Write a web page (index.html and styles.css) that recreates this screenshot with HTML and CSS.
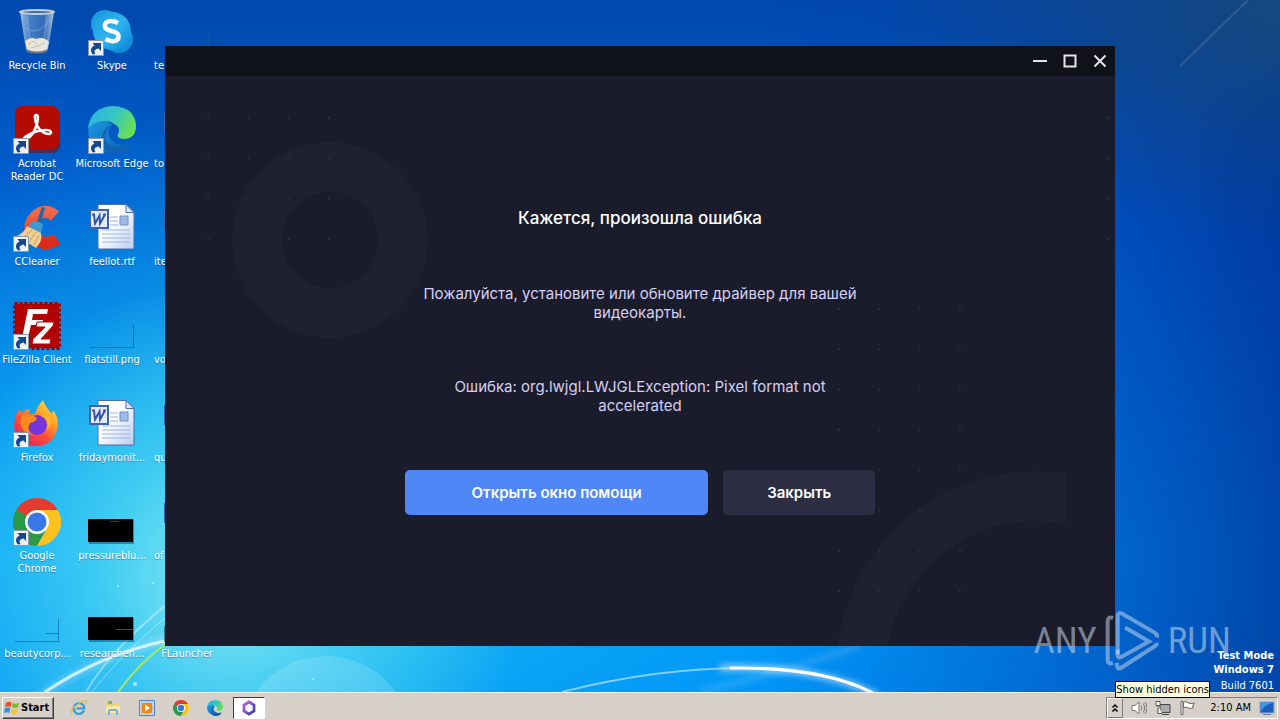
FILE: index.html
```html
<!DOCTYPE html>
<html lang="ru">
<head>
    <meta charset="UTF-8">
    <meta name="viewport" content="width=device-width, initial-scale=1.0">
    <title>FLauncher</title>
    <link rel="stylesheet" href="styles.css">
</head>
<body>

    <!-- Shared icons -->
    <svg class="sprite" aria-hidden="true">
        <defs>
            <linearGradient id="gBin" x1="0" x2="1"><stop offset="0" stop-color="#b9cfe6"/><stop offset=".3" stop-color="#4f86c8"/><stop offset=".7" stop-color="#3a70b8"/><stop offset="1" stop-color="#c5d8ea"/></linearGradient>
            <linearGradient id="gSkype" x1="0" y1="0" x2="1" y2="1"><stop offset="0" stop-color="#1a9bdc"/><stop offset=".5" stop-color="#2cb4ee"/><stop offset="1" stop-color="#0d86d8"/></linearGradient>
            <linearGradient id="gEdgeTop" x1="0" x2="1" y1=".2" y2=".6"><stop offset="0" stop-color="#2fb2e4"/><stop offset=".5" stop-color="#35c6c4"/><stop offset="1" stop-color="#6fe04a"/></linearGradient>
            <linearGradient id="gEdgeLow" x1="0" x2="1" y2="1"><stop offset="0" stop-color="#1a9be0"/><stop offset="1" stop-color="#0f5cae"/></linearGradient>
            <linearGradient id="gCc" x2="0" y2="1"><stop offset="0" stop-color="#f0694a"/><stop offset="1" stop-color="#d92a1c"/></linearGradient>
            <linearGradient id="gDoc" x2="1" y2="1"><stop offset=".4" stop-color="#fff"/><stop offset="1" stop-color="#b9cdf0"/></linearGradient>
            <linearGradient id="gFox" x1="1" x2=".3" y2="1"><stop offset="0" stop-color="#fff44f"/><stop offset=".35" stop-color="#ffa726"/><stop offset=".7" stop-color="#ff4a3a"/><stop offset="1" stop-color="#e0245e"/></linearGradient>
            <linearGradient id="gHex" x2="1" y2="1"><stop offset="0" stop-color="#b264d8"/><stop offset="1" stop-color="#3f3ea8"/></linearGradient>
        </defs>

        <symbol id="arrow" viewBox="0 0 16 16">
            <path d="M.5.5h15v15H.5z" fill="#eef1f5" stroke="#8b98a8"/>
            <path d="M5 14.500C1.500 11 3 7 6.500 5.500L4.500 3H13v8L10.500 8.500C7 9 5.500 11 7.500 14z" fill="#17468c"/>
        </symbol>

        <symbol id="bin" viewBox="0 0 48 48">
            <path d="M7 4h34l-6 38q-11 5-22 0z" fill="url(#gBin)" opacity=".85"/>
            <path d="M14 9l4 28M34 9l-4 27M12 20q14 9 24-8" fill="none" stroke="#9cc0e6" stroke-opacity=".5"/>
            <path d="M12 33q6-5 11-2 8-3 13 3l-2 8q-10 5-20 0z" fill="#e9e4dc"/>
            <path d="M15 36l6-3 5 5 6-4M18 40l7-2" fill="none" stroke="#cdbfa8"/>
            <path d="M13 41q11 5 22 0l-1 3q-10 3-20 0z" fill="#6d7884"/>
            <ellipse cx="24" cy="4" rx="17" ry="2" fill="#3d6fa8" stroke="#c4cbd2" stroke-width="2"/>
        </symbol>

        <symbol id="skype" viewBox="0 0 48 48">
            <circle cx="17" cy="16" r="14" fill="#1b9fe2"/>
            <circle cx="31" cy="31" r="14" fill="#0e90dc"/>
            <circle cx="24" cy="23" r="19" fill="url(#gSkype)"/>
            <path d="M30 15q-6-3-10-1.500c-5 2-4 7.500 2 9s9 3 8.500 7-7 5-13 1.500" fill="none" stroke="#fff" stroke-width="4.500"/>
        </symbol>

        <symbol id="acrobat" viewBox="0 0 48 48">
            <rect x="2" y="1" width="44" height="44" rx="7" fill="#7a0700" opacity=".5" transform="translate(1 2)"/>
            <rect x="2" y="0" width="44" height="43" rx="7" fill="#b30b00"/>
            <path d="M12 34c8-4 12-13 13-22 0-4-4-4-3 0 1 9 7 16 14 16 4-1 2-4-3-4-8 0-15 3-21 7-3 3-2 5 0 3z" fill="none" stroke="#fff" stroke-width="2.500"/>
        </symbol>

        <symbol id="edge" viewBox="0 0 48 48">
            <path d="M1 18Q-3 36 15 45q18 7 28-8-12 5-20-3-6-8 1-15Q14 8 1 18z" fill="url(#gEdgeLow)"/>
            <path d="M24 19q-9 7-6 16 6 10 26 3-8 13-23 9Q12 40 15 27q3-7 9-8z" fill="#1262b4"/>
            <path d="M0 22Q3 1 25 0q22 1 23 20 0 13-13 13-7-1-5-5 3-5-2-9Q15 9 0 22z" fill="url(#gEdgeTop)"/>
        </symbol>

        <symbol id="ccleaner" viewBox="0 0 48 48">
            <path d="M42 12Q32 3 22 13q-10 12 1 22 10 8 21 0" fill="none" stroke="url(#gCc)" stroke-width="12"/>
            <path d="M29 3l3 1-5 18-4-2z" fill="#2268a8"/>
            <path d="M18 18q6-3 12 3l-2 8-12-6z" fill="#3f9ad4"/>
            <path d="M14 22l14 7q2 8-5 15L4 32q7-3 10-10z" fill="#f1cf93"/>
            <path d="M9 35l10-9M15 39l8-11M21 41l5-10" stroke="#c99c55"/>
        </symbol>

        <symbol id="word" viewBox="0 0 48 48">
            <path d="M10 .5h28l8 8V45H10z" fill="url(#gDoc)" stroke="#4a6cae"/>
            <path d="M38 .5l8 8h-8z" fill="#dfe9fa" stroke="#4a6cae"/>
            <path d="M22 13h8M22 17h8M22 21h8M14 26h28M14 30h28M14 34h28M14 38h28" stroke="#9db3de"/>
            <path d="M32 12h8v9h-8z" fill="#9db9e4" stroke="#6f90cc"/>
            <path d="M2 6h18v18H2z" fill="#e2ebfb" stroke="#3f62b0" stroke-width="2"/>
            <path d="M4 10.500h3M6 10.500l1 9 4.500-8 .5 8 5-9M15 10.500h3" fill="none" stroke="#3454a8" stroke-width="2"/>
        </symbol>

        <symbol id="filezilla" viewBox="0 0 48 48">
            <rect x="2" y="2" width="44" height="44" fill="#b30000"/>
            <rect x="1.500" y="1.500" width="45" height="45" fill="none" stroke="#a00000" stroke-width="3" stroke-dasharray="3 2"/>
            <path d="M15 7h20l-1 5H20l-1 6h11l-1 5H18l-3 13H9z" fill="#fff"/>
            <path d="M24 20h17l-1 4-12 13h10l-1 5H19l1-5 12-12h-9z" fill="#fff" stroke="#b30000" stroke-width="1"/>
        </symbol>

        <symbol id="firefox" viewBox="0 0 48 48">
            <path d="M3 17q0-5 4-8 0 3 2 4 3-4 8-4l-2 5h7q3-9 8-14 3 8 9 14l1-4q7 9 4 20-5 16-21 16Q3 46 1 26q0-5 2-9z" fill="url(#gFox)"/>
            <circle cx="24" cy="25" r="10" fill="#7436d8"/>
            <path d="M9 15q10-1 15 3-1 4-7 5-4 8 3 12Q8 33 7 21z" fill="#ff8a1e"/>
            <path d="M28 16q10 4 5 14 6-3 5-12-5-5-10-2z" fill="#ffb52e"/>
        </symbol>

        <symbol id="chrome" viewBox="0 0 48 48">
            <path d="M24 24L3.200 12A24 24 0 0 1 44.800 12z" fill="#e33b2e"/>
            <path d="M24 24L3.200 12A24 24 0 0 0 24 48l10-18z" fill="#2a9a47"/>
            <path d="M24 12h20.800A24 24 0 0 1 24 48l10.400-18z" fill="#fcc31e"/>
            <circle cx="24" cy="24" r="12" fill="#fff"/>
            <circle cx="24" cy="24" r="9.500" fill="#3b78e7"/>
        </symbol>

        <symbol id="blankshot" viewBox="0 0 48 48">
            <path d="M2 45.500h43.500V23" fill="none" stroke="#0d5f9f" stroke-opacity=".8"/>
        </symbol>

        <symbol id="blankshot2" viewBox="0 0 48 48">
            <path d="M2 45.500h43.500V23M33 37.500h12" fill="none" stroke="#0d6fb0" stroke-opacity=".8"/>
        </symbol>

        <symbol id="darkshot" viewBox="0 0 48 48">
            <path d="M1 22h45v24H1z" fill="#0a5e7e" opacity=".6"/>
            <path d="M0 21h45v23H0z" fill="#000"/>
            <path d="M22 23.500h9" stroke="#3a4040"/>
        </symbol>

        <symbol id="darkshot2" viewBox="0 0 48 48">
            <path d="M1 22h45v24H1z" fill="#0a5e7e" opacity=".6"/>
            <path d="M0 21h45v23H0z" fill="#000"/>
            <path d="M28 33.500h17" stroke="#1d6b28"/>
        </symbol>

        <symbol id="flauncher" viewBox="0 0 48 48">
            <path d="M2 30h40v16H2z" fill="#fff" stroke="#123"/>
        </symbol>
    </svg>

    <main class="desktop">
        <svg class="wallpaper" viewBox="0 0 1280 692" preserveAspectRatio="none" aria-hidden="true">
            <g fill="none" stroke="#fff">
                <path class="glow" d="M40 696Q100 655 165 640T330 596" stroke-width="6" stroke-opacity=".3"/>
                <path d="M45 692Q100 655 165 641T330 596" stroke-width="3" stroke-opacity=".7"/>
                <path d="M86 692Q110 650 172 600" stroke-width="2" stroke-opacity=".4"/>
                <path d="M92 692Q120 655 172 612" stroke-opacity=".4"/>
                <path d="M562 692C640 672 700 668 745 668" stroke-width="2" stroke-opacity=".5"/>
                <path class="glow" d="M720 668C790 666 840 676 878 696" stroke-width="6" stroke-opacity=".6"/>
                <path d="M730 668C790 667 840 676 873 693" stroke-width="3"/>
                <path class="glow" d="M700 692Q790 670 860 646" stroke-width="6" stroke-opacity=".15"/>
                <path d="M1248 0L1180 66" stroke-opacity=".12" stroke-width="2"/>
            </g>
            <path d="M118 692Q140 662 168 642" fill="none" stroke="#a4ec5c" stroke-width="2"/>
            <circle cx="326" cy="742" r="86" fill="#fff" fill-opacity=".15"/>
            <g fill="#fff" fill-opacity=".6"><circle cx="118" cy="586" r="1"/><circle cx="153" cy="583" r="1"/><circle cx="135" cy="684" r="2"/><circle cx="313" cy="679" r="1"/></g>
        </svg>

        <div class="icons">
            <div class="icon"><svg><use href="#bin"/></svg><span>Recycle Bin</span></div>
            <div class="icon shortcut"><svg><use href="#acrobat"/></svg><svg class="badge"><use href="#arrow"/></svg><span>Acrobat Reader DC</span></div>
            <div class="icon shortcut"><svg><use href="#ccleaner"/></svg><svg class="badge"><use href="#arrow"/></svg><span>CCleaner</span></div>
            <div class="icon shortcut"><svg><use href="#filezilla"/></svg><svg class="badge"><use href="#arrow"/></svg><span>FileZilla Client</span></div>
            <div class="icon shortcut"><svg><use href="#firefox"/></svg><svg class="badge"><use href="#arrow"/></svg><span>Firefox</span></div>
            <div class="icon shortcut"><svg><use href="#chrome"/></svg><svg class="badge"><use href="#arrow"/></svg><span>Google Chrome</span></div>
            <div class="icon"><svg><use href="#blankshot2"/></svg><span>beautycorp...</span></div>

            <div class="icon shortcut"><svg><use href="#skype"/></svg><svg class="badge"><use href="#arrow"/></svg><span>Skype</span></div>
            <div class="icon shortcut"><svg><use href="#edge"/></svg><svg class="badge"><use href="#arrow"/></svg><span>Microsoft Edge</span></div>
            <div class="icon"><svg><use href="#word"/></svg><span>feellot.rtf</span></div>
            <div class="icon"><svg><use href="#blankshot"/></svg><span>flatstill.png</span></div>
            <div class="icon"><svg><use href="#word"/></svg><span>fridaymonit...</span></div>
            <div class="icon"><svg><use href="#darkshot"/></svg><span>pressureblu...</span></div>
            <div class="icon"><svg><use href="#darkshot2"/></svg><span>researchen...</span></div>

            <div class="icon covered"><svg><use href="#blankshot"/></svg><span>te</span></div>
            <div class="icon covered"><svg><use href="#word"/></svg><span>to</span></div>
            <div class="icon covered"><svg><use href="#word"/></svg><span>iter</span></div>
            <div class="icon covered"><svg><use href="#blankshot"/></svg><span>vo</span></div>
            <div class="icon covered"><svg><use href="#word"/></svg><span>qu</span></div>
            <div class="icon covered"><svg><use href="#word"/></svg><span>of</span></div>
            <div class="icon"><svg><use href="#flauncher"/></svg><span>FLauncher</span></div>
        </div>

        <section class="window">
            <header class="titlebar">
                <button type="button" aria-label="Свернуть"><svg viewBox="0 0 14 14"><path d="M0 7h14"/></svg></button>
                <button type="button" aria-label="Развернуть"><svg viewBox="0 0 14 14"><path d="M1.500 1.500h11v11h-11z"/></svg></button>
                <button type="button" aria-label="Закрыть окно"><svg viewBox="0 0 14 14"><path d="M1.500 1.500l11 11M12.500 1.500l-11 11"/></svg></button>
            </header>
            <div class="content">
                <svg class="pattern" viewBox="0 0 950 570" preserveAspectRatio="xMidYMid slice" aria-hidden="true">
                    <defs>
                        <pattern id="dots" width="40.300" height="40.300" patternUnits="userSpaceOnUse"><circle class="dot" cx="2" cy="2" r="1"/></pattern>
                        <clipPath id="cut"><path d="M0 0h901v570H0z"/></clipPath>
                    </defs>
                    <circle cx="165" cy="164" r="73"/>
                    <circle cx="871" cy="595" r="175" clip-path="url(#cut)"/>
                    <g class="dots">
                        <rect width="126" height="126" fill="url(#dots)" transform="translate(41 40)"/>
                        <rect width="5" height="126" fill="url(#dots)" transform="translate(941 40)"/>
                        <rect width="126" height="287" fill="url(#dots)" transform="translate(672 231)"/>
                    </g>
                </svg>
                <div class="message">
                    <h1>Кажется, произошла ошибка</h1>
                    <p>Пожалуйста, установите или обновите драйвер для вашей видеокарты.</p>
                    <p class="error">Ошибка: org.lwjgl.LWJGLException: Pixel format not accelerated</p>
                    <div class="buttons">
                        <button type="button" class="primary">Открыть окно помощи</button>
                        <button type="button" class="secondary">Закрыть</button>
                    </div>
                </div>
            </div>
        </section>

        <div class="watermark">
            <span>ANY</span>
            <svg viewBox="0 0 165 185" aria-hidden="true">
                <path d="M24 24Q8 18 8 34V150Q8 164 24 158"/>
                <path d="M38 132V16Q40 4 52 11L150 68Q158 74 156 82"/>
                <path d="M38 118V136Q40 146 50 140L132 94 60 52"/>
                <path d="M156 98Q156 104 148 109L50 172Q38 180 36 166V158"/>
            </svg>
            <span>RUN</span>
        </div>

        <div class="build">
            <strong>Test Mode</strong>
            <strong>Windows 7</strong>
            <span>Build 7601</span>
        </div>
    </main>

    <footer class="taskbar">
        <button type="button" class="start">
            <svg viewBox="0 0 16 16" aria-hidden="true">
                <path d="M2 3q3-2 5.500-.5L6.500 7Q4 6 1 7z" fill="#e8502a"/>
                <path d="M8.500 3Q12 4.500 15 3l-1 4.500q-3 1-6-.3z" fill="#7ebb32"/>
                <path d="M.8 8.200q3-1.500 5.500-.2l-1 5q-2.500-1.300-5.300 0z" fill="#3a8ade"/>
                <path d="M7.500 8.500q3 1.300 6.200.3l-1.200 4.700q-3 1-6-.5z" fill="#f7c22c"/>
            </svg>
            Start
        </button>
        <nav class="quick">
            <button type="button" aria-label="Internet Explorer"><svg viewBox="0 0 16 16"><path d="M13 10.500Q11 14 8 14q-5-.5-5.200-5.500Q3 3.500 8 3q5 .5 5.200 5.500H5.500" fill="none" stroke="#2f9be0" stroke-width="2.200"/><path d="M1 14Q-1 10 6 5q6-5 9-4 1 1-1 4" fill="none" stroke="#e6bb3c" stroke-width="1.300"/></svg></button>
            <button type="button" aria-label="Explorer"><svg viewBox="0 0 16 16"><path d="M1 2h5l1 2h7v9H1z" fill="#efd078"/><path d="M3 1h4v3H3z" fill="#74b46a"/><path d="M1 6h14v7H1z" fill="#f7e7a8"/><path d="M3 15v-4q0-2 2-2h6q2 0 2 2v4h-2v-4H5v4z" fill="#6eb4de"/></svg></button>
            <button type="button" aria-label="Media Player"><svg viewBox="0 0 16 16"><path d="M.5.5h15v15H.5z" fill="#b8d6f0" stroke="#4f87bd"/><path d="M3 3h10v10H3z" fill="#f08a1c"/><circle cx="8" cy="8" r="5.500" fill="#f28614"/><path d="M6 4.500l5 3.500-5 3.500z" fill="#fff"/></svg></button>
            <button type="button" aria-label="Chrome"><svg><use href="#chrome"/></svg></button>
            <button type="button" aria-label="Edge"><svg><use href="#edge"/></svg></button>
            <button type="button" class="active" aria-label="FLauncher"><svg viewBox="0 0 16 16"><path d="M8 2l5 3v6l-5 3-5-3V5z" fill="none" stroke="url(#gHex)" stroke-width="2.800"/></svg></button>
        </nav>
        <div class="tray">
            <button type="button" class="more" aria-label="Show hidden icons"><svg viewBox="0 0 8 10"><path d="M1.500 4.500L4 2l2.500 2.500M1.500 8.500L4 6l2.500 2.500" fill="none" stroke="#000" stroke-width="1.500"/></svg></button>
            <svg viewBox="0 0 16 16"><path d="M1 5.500h3L8 2v12l-4-3.500H1z" fill="#fff" stroke="#777"/><path d="M10 5.500q2 2.500 0 5M12 3.500q3.500 4.500 0 9M14 2q4 6 0 12" fill="none" stroke="#777"/></svg>
            <svg viewBox="0 0 16 16"><path d="M5 4.500h10v8H5zM7 14.500h7" fill="#aaa" stroke="#444"/><path d="M1 1.500h4v4H1zM3 5.500v8h4" fill="#fff" stroke="#555"/></svg>
            <svg viewBox="0 0 16 16"><path d="M2 1.500h2v13H2z" fill="#fff" stroke="#666"/><path d="M4.500 2q3-1 5 1 2 1 6 0l-2 3 1 2q-3 1-5 0-2-1.500-5-.5z" fill="#fff" stroke="#666"/></svg>
            <time>2:10 AM</time>
            <svg viewBox="0 0 16 16"><path d="M1 2h14v11H1z" fill="#1c5fc0" stroke="#8fa8c8"/><path d="M2 11Q6 4 14 3V2.500H2z" fill="#3f9be8"/><path d="M4 14.500h8" stroke="#6f7f92"/></svg>
            <div class="tooltip" role="tooltip">Show hidden icons</div>
        </div>
    </footer>

</body>
</html>
```
FILE: styles.css
```css
* {
    box-sizing: border-box;
}

body {
    margin: 0;
    min-height: 100vh;
    display: flex;
    flex-direction: column;
    font-family: "DejaVu Sans Condensed", "Noto Sans", sans-serif;
    font-size: 11px;
    line-height: 13px;
    overflow: hidden;
}

button {
    font: inherit;
    border: none;
    padding: 0;
    cursor: pointer;
}

.sprite {
    position: absolute;
    width: 0;
    height: 0;
}

/* Desktop */
.desktop {
    flex: 1;
    display: grid;
    position: relative;
    background:
        radial-gradient(ellipse 300px 300px at 230px 580px, rgba(150, 238, 242, 0.9), rgba(90, 220, 242, 0.6) 45%, transparent),
        radial-gradient(ellipse 520px 420px at 300px 520px, rgba(40, 205, 240, 0.9), rgba(20, 180, 240, 0.5) 50%, transparent),
        radial-gradient(ellipse 420px 240px at 1280px 0, #15497f, transparent),
        linear-gradient(90deg, transparent 60%, rgba(0, 60, 170, 0.6) 88%, rgba(0, 50, 150, 0.8)),
        linear-gradient(#0048ac, #0060d0 28%, #0090f4 65%, #00a0fa 80%, #0094f8);
}

.desktop > * {
    grid-area: 1 / 1;
}

.wallpaper {
    position: absolute;
    width: 100%;
    height: 100%;
}

.glow {
    filter: blur(3px);
}

.icons {
    display: grid;
    grid-auto-flow: column;
    grid-template-rows: repeat(7, 98px);
    grid-template-columns: repeat(3, 74px);
    column-gap: 1px;
    padding-top: 8px;
    height: 0;
    position: relative;
}

.icon {
    display: grid;
    justify-items: center;
    align-content: start;
    row-gap: 3px;
    color: #fff;
    text-align: center;
    text-shadow: 0 1px 1px rgba(0, 40, 90, 0.4);
}

.icon svg {
    grid-area: 1 / 1;
    width: 48px;
    height: 48px;
}

.icon .badge {
    width: 16px;
    height: 16px;
    align-self: end;
    justify-self: start;
    margin-left: 13px;
}

.icon span {
    grid-row: 2;
    max-width: 74px;
}

.covered span {
    justify-self: start;
    padding-left: 4px;
}

/* Launcher window */
.window {
    place-self: center;
    display: flex;
    flex-direction: column;
    width: 950px;
    max-width: 100%;
    min-height: 600px;
    background: #1b1c2b;
    color: #fff;
    font-family: Inter, sans-serif;
    position: relative;
}

.titlebar {
    display: flex;
    justify-content: flex-end;
    height: 30px;
    background: #101219;
}

.titlebar button {
    display: grid;
    place-items: center;
    width: 30px;
    background: none;
}

.titlebar svg {
    width: 14px;
    height: 14px;
    fill: none;
    stroke: #e4e4ea;
    stroke-width: 2;
}

.content {
    flex: 1;
    display: grid;
    place-items: center;
    position: relative;
}

.pattern {
    position: absolute;
    width: 100%;
    height: 100%;
    fill: none;
    stroke: #1f2030;
    stroke-width: 50;
}

.dots {
    stroke: none;
}

.dot {
    fill: #32333f;
    stroke: none;
}

.message {
    display: flex;
    flex-direction: column;
    gap: 55px;
    width: 470px;
    max-width: 100%;
    text-align: center;
    position: relative;
}

.message h1 {
    margin: 0;
    font-size: 17px;
    line-height: 22px;
    font-weight: 500;
}

.message p {
    margin: 0;
    padding: 0 10px;
    font-size: 15px;
    line-height: 19px;
    color: #d4d0f4;
}

.message .error {
    padding: 0 40px;
}

.buttons {
    display: flex;
    gap: 15px;
}

.buttons button {
    height: 45px;
    border-radius: 5px;
    color: #fff;
    font-size: 15px;
    font-weight: 600;
}

.primary {
    flex: 2;
    background: #4f87f6;
}

.secondary {
    flex: 1;
    background: #2d2d44;
}

/* Texts over the wallpaper */
.watermark {
    place-self: end;
    display: flex;
    align-items: center;
    gap: 8px;
    margin: 0 49px 20px 0;
    color: rgba(205, 220, 240, 0.55);
    font-family: "Liberation Sans Narrow", "Roboto Condensed", sans-serif;
    font-size: 37px;
    line-height: 62px;
    position: relative;
}

.watermark svg {
    width: 55px;
    height: 62px;
    fill: none;
    stroke: rgba(205, 220, 240, 0.5);
    stroke-width: 12;
}

.build {
    place-self: end;
    display: flex;
    flex-direction: column;
    gap: 1px;
    padding-right: 6px;
    color: #fff;
    text-align: right;
    position: relative;
}

.build span {
    padding-top: 2px;
}

/* Taskbar */
.taskbar {
    display: flex;
    align-items: center;
    height: 28px;
    padding: 2px 2px 0;
    background: #d6d0c8;
    border-top: 1px solid #f4f2ee;
    color: #000;
    position: relative;
}

.start {
    display: flex;
    align-items: center;
    gap: 1px;
    height: 22px;
    width: 52px;
    padding: 0 1px;
    background: #d6d0c8;
    border: 1px solid;
    border-color: #fff #404040 #404040 #fff;
    box-shadow: inset -1px -1px #808080;
    font-weight: bold;
}

.start svg {
    flex: none;
    width: 16px;
    height: 16px;
}

.quick {
    display: flex;
    gap: 2px;
    margin-left: 9px;
}

.quick button {
    display: grid;
    place-items: center;
    width: 32px;
    height: 22px;
    background: none;
}

.quick svg {
    width: 16px;
    height: 16px;
}

.quick .active {
    background: #fff;
    border: 1px solid;
    border-color: #404040 #fff #fff #404040;
}

.tray {
    display: flex;
    align-items: center;
    gap: 8px;
    height: 22px;
    margin-left: auto;
    padding-right: 2px;
    border: 1px solid;
    border-color: #808080 #fff #fff #808080;
    position: relative;
}

.tray svg {
    width: 16px;
    height: 16px;
}

.tray time {
    padding-left: 7px;
}

.more {
    display: grid;
    place-items: center;
    width: 16px;
    height: 20px;
    background: #d6d0c8;
    border: 1px solid;
    border-color: #fff #808080 #808080 #fff;
}

.tray .more svg {
    width: 8px;
    height: 10px;
}

.tooltip {
    position: absolute;
    left: 8px;
    bottom: 20px;
    padding: 1px 0;
    white-space: nowrap;
    background: #ffffe1;
    border: 1px solid #000;
}
```
